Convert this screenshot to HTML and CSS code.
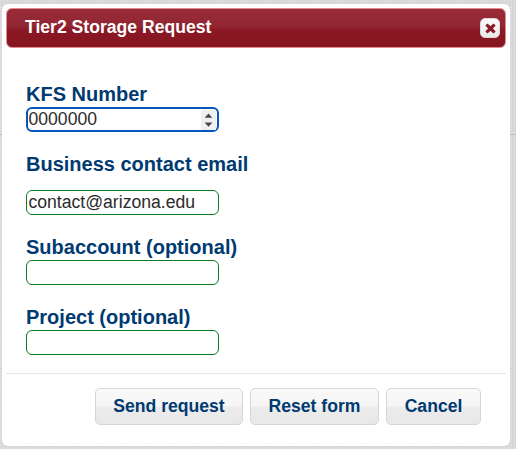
FILE: index.html
```html
<!DOCTYPE html>
<html lang="en">
<head>
<meta charset="utf-8">
<title>Tier2 Storage Request</title>
<link rel="stylesheet" href="styles.css">
</head>
<body>
<div class="page-rule"></div>
<section class="dialog">
  <header class="titlebar">
    <h1>Tier2 Storage Request</h1>
    <button class="close" type="button" aria-label="Close">
      <svg width="11" height="11" viewBox="0 0 10 10"><path d="M2.2 1.1 5 3.5 7.8 1.1 9 2.3 6.5 5 9 7.7 7.8 8.9 5 6.5 2.2 8.9 1 7.7 3.5 5 1 2.3Z" fill="#8b1824" stroke="#8b1824" stroke-width="1" stroke-linejoin="round"/></svg>
    </button>
  </header>
  <form class="form">
    <label class="field"><span class="label">KFS Number</span>
      <span class="input focused"><span>0000000</span>
        <span class="spinner"><svg width="15" height="20" viewBox="0 0 15 20"><path d="M3.6 7.7 7.5 3.5l3.9 4.2zM3.6 12.6h7.8l-3.9 4.2z" fill="#484848"/></svg></span>
      </span>
    </label>
    <label class="field email"><span class="label">Business contact email</span><span class="input">contact@arizona.edu</span></label>
    <label class="field"><span class="label">Subaccount (optional)</span><span class="input"></span></label>
    <label class="field"><span class="label">Project (optional)</span><span class="input"></span></label>
  </form>
  <footer class="actions">
    <button class="send" type="button">Send request</button>
    <button class="reset" type="button">Reset form</button>
    <button class="cancel" type="button">Cancel</button>
  </footer>
</section>
</body>
</html>
```
FILE: styles.css
```css
* { box-sizing: border-box; }
body {
  margin: 0;
  height: 449px;
  padding: 4px 6px 3px 2px;
  overflow: hidden;
  position: relative;
  background: radial-gradient(circle at 1px 1px, #dedede 0 .7px, transparent 1px) 0 0 / 3px 3px #d5d5d5;
  font-family: "Liberation Sans", Arial, sans-serif;
}
.page-rule { position: absolute; left: 0; right: 0; top: 134px; height: 1px; background: #bbb; }
.dialog {
  position: relative;
  height: 442px;
  padding: 4px;
  border-radius: 6px;
  background: #fff;
  display: flex;
  flex-direction: column;
}
.titlebar {
  height: 40px;
  flex: none;
  display: flex;
  align-items: center;
  justify-content: space-between;
  padding: 0 5px 0 18px;
  border: 1px solid #e38a8e;
  border-radius: 6px;
  background: linear-gradient(#992b37 0, #912633 45%, #8b1824 55%, #861621 100%);
}
.titlebar h1 { margin: 0 0 3px; color: #fff; font-size: 17.6px; line-height: 22px; white-space: nowrap; }
.close {
  width: 20px;
  height: 20px;
  padding: 0;
  display: grid;
  place-items: center;
  border: 1px solid #ddd5d6;
  border-radius: 5px;
  background: linear-gradient(#fafafa, #eaeaea);
}
.form { padding: 35px 20px 0; display: flex; flex-direction: column; gap: 21px; }
.field { display: block; }
.label { display: block; height: 24px; color: #003a70; font-size: 20px; font-weight: bold; line-height: 23px; white-space: nowrap; }
.input {
  width: 193px;
  height: 25px;
  display: flex;
  align-items: center;
  justify-content: space-between;
  padding: 0 2px 1px 1.5px;
  border: 1px solid #0b7c23;
  border-radius: 6px;
  background: #fff;
  color: #2b2b2b;
  font-size: 17.6px;
}
.focused { border: 2px solid #0657bc; padding: 0 1px 0 .5px; }
.spinner { display: flex; width: 15px; height: 20px; background: #f0f0f0; }
.email .input { margin-top: 13px; }
.actions {
  margin-top: 18px;
  padding: 14px 25px 0;
  border-top: 1px solid #e7e7e7;
  display: flex;
  justify-content: flex-end;
  gap: 7px;
}
.actions button {
  height: 37px;
  padding: 0 0 1px;
  border: 1px solid #d3d7d9;
  border-radius: 5px;
  background: linear-gradient(#f9f9f9 0, #f5f5f5 48%, #ececec 52%, #e8e8e8 100%);
  color: #003a70;
  font: bold 17.6px "Liberation Sans", Arial, sans-serif;
}
.actions .send { width: 148px; }
.actions .reset { width: 129px; }
.actions .cancel { width: 95px; }
```
